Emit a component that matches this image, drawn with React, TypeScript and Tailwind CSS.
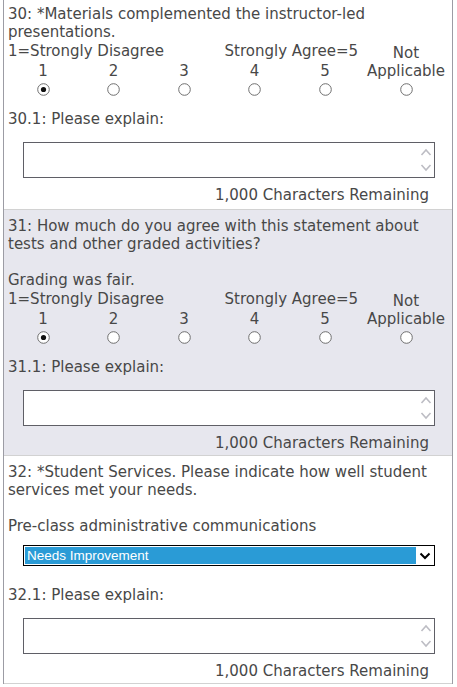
import React from 'react';

const FONT = { fontFamily: '"DejaVu Sans", Verdana, sans-serif' };

function Radio({ checked }: { checked?: boolean }) {
  return (
    <svg width="13" height="13" viewBox="0 0 13 13" className="block">
      <circle cx="6.5" cy="6.5" r="5.8" fill="#ffffff" stroke="#6f6f6f" strokeWidth="1" />
      {checked && <circle cx="6.5" cy="6.5" r="2.6" fill="#111111" />}
    </svg>
  );
}

function Scale() {
  const cols = ['1', '2', '3', '4', '5'];
  return (
    <div className="grid grid-cols-[70px_71px_70px_71px_70px_1fr] text-center">
      <div className="col-span-5 flex h-[20px] justify-between leading-[20px]">
        <span>1=Strongly Disagree</span>
        <span className="pr-[2px]">Strongly Agree=5</span>
      </div>
      <div className="h-[20px] pt-[2px] leading-[20px]">Not</div>
      {cols.map((c) => (
        <div key={c} className="h-[20px] leading-[20px]">
          {c}
        </div>
      ))}
      <div className="h-[20px] leading-[20px]">Applicable</div>
      {[0, 1, 2, 3, 4, 5].map((i) => (
        <div key={i} className="flex h-[16px] items-center justify-center">
          <Radio checked={i === 0} />
        </div>
      ))}
    </div>
  );
}

function Explain({ label, top }: { label: string; top: string }) {
  return (
    <div>
      <div className={top}>{label}</div>
      <div className="relative ml-[15px] mr-[17px] mt-[14px] h-[36px] border border-[#5f5f66] bg-white">
        <svg className="absolute right-[1px] top-[4px]" width="14" height="26" viewBox="0 0 14 26">
          <path d="M2.5 8 L7 3 L11.5 8" fill="none" stroke="#bdbdc4" strokeWidth="1.6" />
          <path d="M2.5 18 L7 23 L11.5 18" fill="none" stroke="#bdbdc4" strokeWidth="1.6" />
        </svg>
      </div>
      <div className="mr-[23px] mt-[8px] text-right">1,000 Characters Remaining</div>
    </div>
  );
}

export default function App() {
  return (
    <div className="min-h-[687px] bg-white text-[15px] leading-[18px] text-[#484848]" style={FONT}>
      <div className="ml-[3px] w-[450px] border-x border-[#9c9ca4]">
        <section className="border-b border-[#d2d2d2] pb-[5px] pl-[4px] pt-[5px]">
          <p>30: *Materials complemented the instructor-led presentations.</p>
          <Scale />
          <Explain label="30.1: Please explain:" top="mt-[13px]" />
        </section>

        <section className="border-b border-[#d2d2d2] bg-[#e7e7ee] pb-[3px] pl-[4px] pt-[7px]">
          <p>31: How much do you agree with this statement about tests and other graded activities?</p>
          <p className="mt-[18px]">Grading was fair.</p>
          <Scale />
          <Explain label="31.1: Please explain:" top="mt-[13px]" />
        </section>

        <section className="border-b border-[#d2d2d2] pb-[3px] pl-[4px] pt-[7px]">
          <p>32: *Student Services. Please indicate how well student services met your needs.</p>
          <p className="mt-[18px]">Pre-class administrative communications</p>
          <div className="ml-[15px] mr-[17px] mt-[10px] flex h-[21px] border border-black bg-white p-[1px]">
            <div
              className="flex flex-1 items-center bg-[#2a9bd6] pl-[2px] text-[13.5px] text-white"
              style={{ fontFamily: '"Liberation Sans", Arial, sans-serif' }}
            >
              Needs Improvement
            </div>
            <div className="flex w-[17px] items-center justify-center">
              <svg width="12" height="8" viewBox="0 0 12 8">
                <path d="M1.5 1.5 L6 6 L10.5 1.5" fill="none" stroke="#000" strokeWidth="2" />
              </svg>
            </div>
          </div>
          <Explain label="32.1: Please explain:" top="mt-[20px]" />
        </section>
      </div>
    </div>
  );
}
